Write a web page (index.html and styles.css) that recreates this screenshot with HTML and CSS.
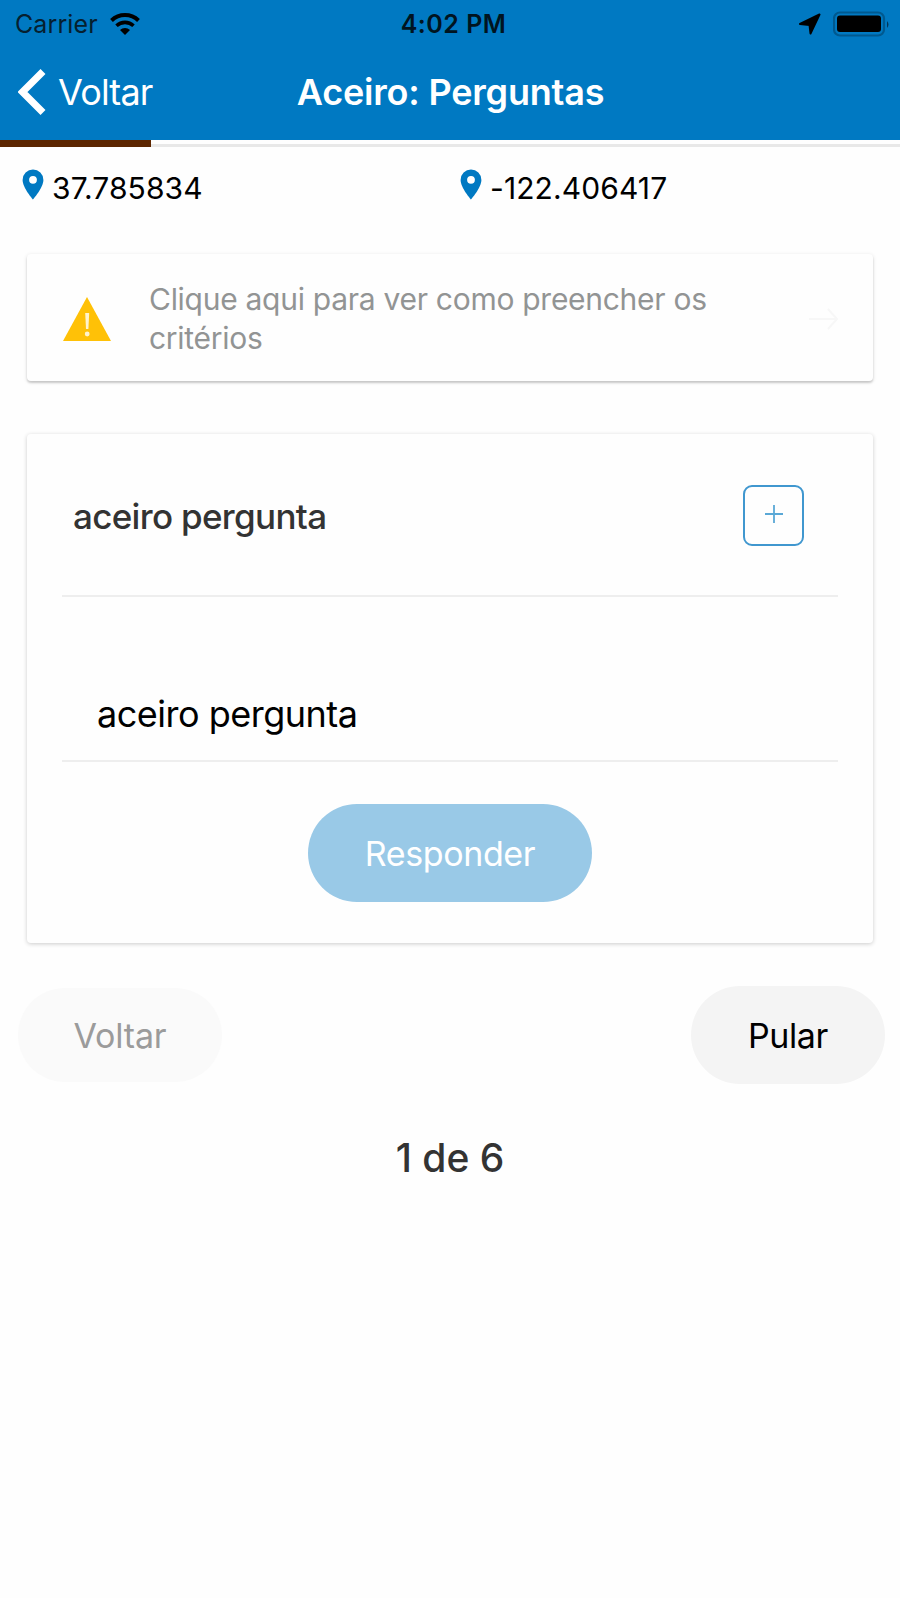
FILE: index.html
```html
<!DOCTYPE html>
<html lang="pt-BR">
<head>
	<meta charset="UTF-8">
	<title>Aceiro: Perguntas</title>
	<link rel="stylesheet" href="styles.css">
</head>
<body>
	<header class="header">
		<div class="status-bar">
			<div class="carrier">
				<span>Carrier</span>
				<svg class="wifi" width="30" height="22" viewBox="0 0 30 22">
					<path d="M1.500 7.500a19.500 19.500 0 0 1 27 0" fill="none" stroke="#000" stroke-width="4"/>
					<path d="M6.500 12.700a12.500 12.500 0 0 1 17 0" fill="none" stroke="#000" stroke-width="3.600"/>
					<path d="M15 22l-5-5a7.200 7.200 0 0 1 10 0z"/>
				</svg>
			</div>
			<span class="time">4:02 PM</span>
			<div class="status-icons">
				<svg width="22" height="22" viewBox="0 0 22 22">
					<path d="M20.500 1.500L11.500 20.500 10.500 12 1 11z" stroke="#000" stroke-width="2" stroke-linejoin="round"/>
				</svg>
				<svg width="57" height="26" viewBox="0 0 57 26">
					<rect x="1" y="1.500" width="50" height="23" rx="6" fill="none" stroke="#00598f" stroke-width="2.200"/>
					<rect x="4" y="4.500" width="44" height="16.500" rx="3"/>
					<path d="M54 10q3 3.500 0 7z" fill="#00365a"/>
				</svg>
			</div>
		</div>
		<nav class="nav-bar">
			<a class="back">
				<svg width="29" height="48" viewBox="0 0 29 48">
					<path d="M25 3.500L4.500 24 25 44.500" fill="none" stroke="#fff" stroke-width="7"/>
				</svg>
				<span>Voltar</span>
			</a>
			<h1>Aceiro: Perguntas</h1>
		</nav>
	</header>
	<div class="progress"><div class="progress-value"></div></div>

	<main>
		<div class="coords">
			<div class="coord">
				<svg width="22" height="31" viewBox="0 0 22 31">
					<path d="M11 .5A10.400 10.400 0 0 0 .6 10.900C.6 18.500 11 30.500 11 30.500S21.400 18.500 21.400 10.900A10.400 10.400 0 0 0 11 .5zm0 14.200a3.900 3.900 0 1 1 0-7.800 3.900 3.900 0 0 1 0 7.800z"/>
				</svg>
				<span>37.785834</span>
			</div>
			<div class="coord">
				<svg width="22" height="31" viewBox="0 0 22 31">
					<path d="M11 .5A10.400 10.400 0 0 0 .6 10.900C.6 18.500 11 30.500 11 30.500S21.400 18.500 21.400 10.900A10.400 10.400 0 0 0 11 .5zm0 14.200a3.900 3.900 0 1 1 0-7.800 3.900 3.900 0 0 1 0 7.800z"/>
				</svg>
				<span>-122.406417</span>
			</div>
		</div>

		<div class="card help">
			<svg width="50" height="46" viewBox="0 0 50 46">
				<path d="M25 1L49 45H1z" fill="#ffc107"/>
				<path d="M23.200 17h4l-.8 16h-2.400z" fill="#fff3cd"/>
				<circle cx="25.200" cy="38" r="2.400" fill="#fff3cd"/>
			</svg>
			<p>Clique aqui para ver como preencher os critérios</p>
			<svg width="32" height="24" viewBox="0 0 32 24">
				<path d="M2 12h28M21 2l9 10L21 22" fill="none" stroke="#f7f7f7" stroke-width="2"/>
			</svg>
		</div>

		<div class="card question">
			<div class="question-head">
				<h2>aceiro pergunta</h2>
				<button class="add">
					<svg width="20" height="20" viewBox="0 0 20 20">
						<path d="M10 1v18M1 10h18" stroke="#5aa8d6" stroke-width="1.800"/>
					</svg>
				</button>
			</div>
			<div class="question-item">aceiro pergunta</div>
			<button class="pill answer">Responder</button>
		</div>

		<div class="actions">
			<button class="pill previous">Voltar</button>
			<button class="pill skip">Pular</button>
		</div>
		<p class="page">1 de 6</p>
	</main>
</body>
</html>
```
FILE: styles.css
```css
* {
	box-sizing: border-box;
}

body {
	margin: 0;
	min-height: 1598px;
	background-color: #fefefe;
	color: #000;
	font-family: Inter, "Liberation Sans", sans-serif;
}

h1, h2, p {
	margin: 0;
}

svg {
	display: block;
	flex-shrink: 0;
}

button {
	padding: 0;
	border: none;
	font-family: inherit;
}

.header {
	height: 140px;
	background-color: #0079c2;
}

.status-bar {
	display: grid;
	grid-template-columns: 1fr auto 1fr;
	align-items: center;
	height: 48px;
	padding: 0 10px 0 15px;
	font-size: 25px;
}

.carrier {
	display: flex;
	align-items: center;
	gap: 12px;
	color: #06202f;
	letter-spacing: 0.1px;
}

.time {
	padding-left: 2px;
	font-weight: 600;
	color: #001420;
	letter-spacing: 0.5px;
}

.status-icons {
	display: flex;
	justify-content: flex-end;
	align-items: center;
	gap: 12px;
}

.nav-bar {
	display: grid;
	grid-template-columns: 1fr auto 1fr;
	align-items: center;
	height: 88px;
	padding: 0 18px;
	color: #fff;
}

.nav-bar h1 {
	padding-left: 1px;
	font-size: 36px;
	font-weight: 600;
	letter-spacing: -0.2px;
	line-height: 44px;
}

.back {
	display: flex;
	align-items: center;
	gap: 11px;
	font-size: 36px;
	letter-spacing: -0.85px;
}

.progress {
	height: 7px;
	background-color: #fefefe;
	border-bottom: 3px solid #e8e8e8;
}

.progress-value {
	width: 151px;
	height: 7px;
	background-color: #5c2600;
}

.coords {
	display: grid;
	grid-template-columns: 438px 1fr;
	padding: 22px 22px 0;
}

.coord {
	display: flex;
	gap: 8px;
	height: 36px;
	font-size: 30px;
	letter-spacing: 0.1px;
	line-height: 38px;
}

.coord svg {
	fill: #0079c2;
}

.card {
	margin: 0 27px;
	border-radius: 4px;
	background-color: #fefefe;
}

.help {
	display: flex;
	align-items: center;
	height: 127px;
	margin-top: 49px;
	padding: 2px 34px 0 35px;
	box-shadow: 0 2px 2px rgba(0, 0, 0, 0.15), 0 1px 4px rgba(0, 0, 0, 0.12);
}

.help p {
	flex: 1;
	margin: 0 60px 0 37px;
	color: #929494;
	font-size: 30px;
	letter-spacing: -0.28px;
	line-height: 39px;
}

.question {
	height: 509px;
	margin-top: 53px;
	padding: 0 35px;
	box-shadow: 0 1px 4px rgba(0, 0, 0, 0.2);
}

.question-head {
	display: flex;
	justify-content: space-between;
	align-items: center;
	height: 163px;
	padding: 2px 34px 0 11px;
	border-bottom: 2px solid #eee;
}

.question-head h2 {
	color: #333;
	font-size: 35px;
	font-weight: 500;
	letter-spacing: -0.68px;
}

.add {
	display: flex;
	justify-content: center;
	align-items: center;
	width: 61px;
	height: 61px;
	padding-bottom: 3px;
	border: 2px solid #4097cf;
	border-radius: 9px;
	background-color: transparent;
}

.question-item {
	height: 165px;
	padding: 95px 35px 0;
	border-bottom: 2px solid #eee;
	font-size: 36px;
	letter-spacing: -0.5px;
	line-height: 44px;
}

.pill {
	display: block;
	height: 98px;
	border-radius: 49px;
	font-size: 34px;
	letter-spacing: -0.4px;
}

.answer {
	width: 284px;
	margin: 42px auto 0;
	background-color: #99c9e7;
	color: #fff;
}

.actions {
	display: flex;
	justify-content: space-between;
	align-items: center;
	margin-top: 43px;
	padding: 0 15px 0 18px;
}

.previous {
	width: 204px;
	height: 94px;
	background-color: #fafafa;
	color: #9b9b9b;
	letter-spacing: -0.2px;
}

.skip {
	width: 194px;
	background-color: #f4f4f4;
	color: #000;
}

.page {
	margin-top: 50px;
	color: #333;
	font-size: 39px;
	font-weight: 500;
	line-height: 48px;
	text-align: center;
}
```
